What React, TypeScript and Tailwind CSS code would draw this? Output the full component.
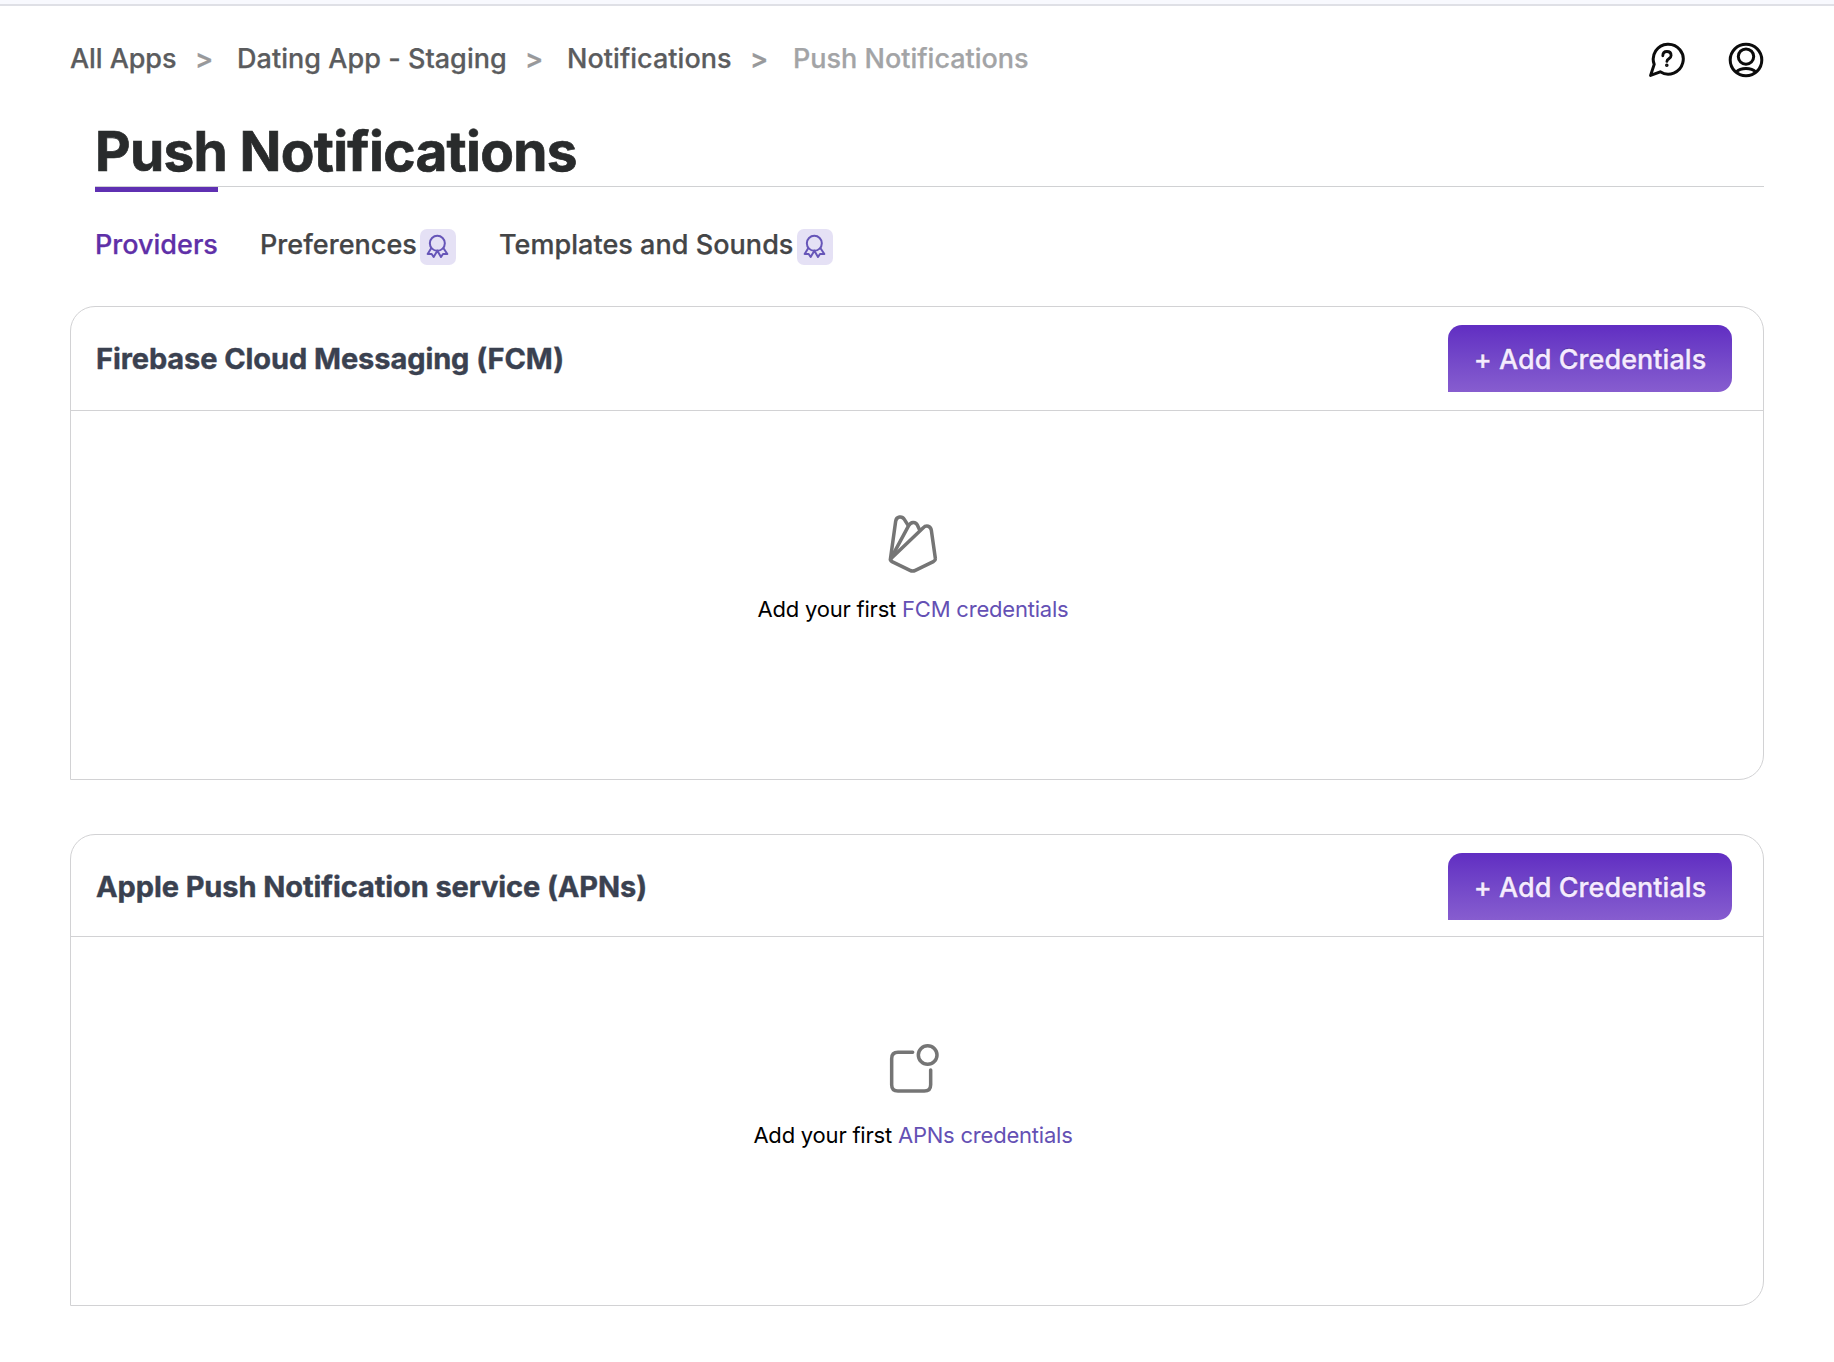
import type { ReactNode } from "react";

function AwardBadge() {
  return (
    <span className="ml-[5px] mt-[3px] flex h-9 w-9 shrink-0 items-center justify-center rounded-[7px] bg-[#e5e1f5]">
      <svg width="36" height="36" viewBox="0 0 108 108" fill="none" stroke="#6655b8" strokeWidth="6" strokeLinejoin="round">
        <circle cx="52" cy="43" r="22.5" />
        <path d="M34 57 L23 75 L35 75 L41 84 L52 65 L63 84 L69 75 L82 75 L70 57" />
      </svg>
    </span>
  );
}

function HelpIcon() {
  return (
    <svg width="38" height="38" viewBox="0 0 38 38" fill="none" stroke="#0c0c0c" strokeWidth="3" strokeLinecap="round" strokeLinejoin="round">
      <path d="M6.2 23.4 A15 15 0 1 1 12.2 30.8 L2.6 34.4 Z" />
      <path d="M14.8 14.8 C14.8 11.5 16.8 10.5 18.9 10.5 C21.5 10.5 23.1 12.2 23.1 14.4 C23.1 17.8 18.9 17.6 18.9 20.4" strokeWidth="2.8" />
      <circle cx="18.8" cy="24.2" r="0.8" strokeWidth="2" />
    </svg>
  );
}

function UserIcon() {
  return (
    <svg width="38" height="38" viewBox="0 0 38 38" fill="none" stroke="#0c0c0c" strokeWidth="3">
      <circle cx="19" cy="19" r="15.8" />
      <circle cx="19" cy="15.6" r="7.7" />
      <path d="M9 31.2 C14 26.2 24 26.2 29 31.2" />
    </svg>
  );
}

function FirebaseIcon() {
  return (
    <svg width="60" height="60" viewBox="430 38 180 180" fill="none" stroke="#757575" strokeWidth="10.5" strokeLinecap="round" strokeLinejoin="round">
      <path d="M452 178 L468 63 C470 48 487 46 494 57 L504 73" />
      <path d="M454 174 L507 76 C513 64 528 63 533 74 L540 89" />
      <path d="M455 174 L550 83 C560 73 573 77 575 90 L587 174 C588 180 585 182 581 184 L527 210 Q519 214 511 210 L457 184 Q450 180 455 174 Z" />
    </svg>
  );
}

function AppBadgeIcon() {
  return (
    <svg width="60" height="60" viewBox="430 59 180 180" fill="none" stroke="#757575" strokeWidth="10.5" strokeLinecap="round">
      <path d="M519 96 H475 Q456 96 456 115 V193 Q456 212 475 212 H554 Q573 212 573 193 V149" />
      <circle cx="564" cy="104" r="28" />
    </svg>
  );
}

function ProviderCard({
  title,
  cardClass,
  headerClass,
  bodyClass,
  icon,
  link,
}: {
  title: string;
  cardClass: string;
  headerClass: string;
  bodyClass: string;
  icon: ReactNode;
  link: string;
}) {
  return (
    <section className={"flex flex-col rounded-[25px] rounded-bl-none border border-[#d2d2d4] " + cardClass}>
      <header className={"flex shrink-0 items-start justify-between border-b border-[#d2d2d4] pl-[25px] pr-[31px] pt-[18px] " + headerClass}>
        <h2 className="flex h-[67px] items-center whitespace-nowrap text-[29px] font-bold tracking-[-0.09px] text-[#3a4150] [-webkit-text-stroke:0.4px_#3a4150]">{title}</h2>
        <button className="flex h-[67px] w-[284px] items-center justify-center whitespace-nowrap rounded-[14px] rounded-bl-none bg-linear-to-b from-[#612dc2] to-[#875dcf] pt-[3px] text-[27px] font-medium tracking-[0.04px] text-[#f5ebff] [-webkit-text-stroke:0.3px_#f5ebff] [text-shadow:0_-1px_1px_rgba(0,0,0,0.25)]">
          + Add Credentials
        </button>
      </header>
      <div className={"flex flex-col items-center pr-2 " + bodyClass}>
        {icon}
        <p className="whitespace-nowrap text-[22px] leading-[33px] tracking-[-0.21px] text-black">
          Add your first <a className="text-[#6450b4]">{link}</a>
        </p>
      </div>
    </section>
  );
}

export default function App() {
  return (
    <div className="h-[1362px] w-[1834px] overflow-hidden bg-white font-['Inter',sans-serif]">
      <div className="h-[6px] border-b-2 border-[#dfe0e6] bg-[#f8f9fe]" />
      <div className="flex h-[104px] items-start justify-between pl-[70px] pr-[69px]">
        <nav className="mt-[33px] flex h-10 items-center whitespace-nowrap text-[27px] font-medium text-[#5b5c5e] [-webkit-text-stroke:0.25px]">
          <span className="w-[125px] tracking-[-0.08px]">All Apps</span>
          <span className="w-[42px] font-semibold text-[#98999b]">&gt;</span>
          <span className="w-[288px] tracking-[0.04px]">Dating App - Staging</span>
          <span className="w-[42px] font-semibold text-[#98999b]">&gt;</span>
          <span className="w-[183px] tracking-[0.04px]">Notifications</span>
          <span className="w-[43px] font-semibold text-[#98999b]">&gt;</span>
          <span className="text-[#a3a4a6]">Push Notifications</span>
        </nav>
        <div className="mt-[35px] flex gap-[41px]">
          <HelpIcon />
          <UserIcon />
        </div>
      </div>
      <div className="ml-[95px] mr-[70px]">
        <h1 className="h-[77px] whitespace-nowrap border-b border-[#d0d1d3] text-[55px] font-bold leading-[82px] tracking-[-0.7px] text-[#292b2c] [-webkit-text-stroke:0.7px_#292b2c]">Push Notifications</h1>
        <div className="h-[5px] w-[123px] bg-[#5f30b2]" />
        <div className="mt-[34px] flex h-10 items-start whitespace-nowrap text-[27px] font-medium leading-[37px] text-[#444547] [-webkit-text-stroke:0.25px]">
          <div className="w-[165px] text-[#5f30a8]">Providers</div>
          <div className="flex w-[239px]">
            <span className="w-[155px] tracking-[0.04px]">Preferences</span>
            <AwardBadge />
          </div>
          <div className="flex">
            <span className="w-[293px] tracking-[0.04px]">Templates and Sounds</span>
            <AwardBadge />
          </div>
        </div>
      </div>
      <main className="mr-[70px] ml-[70px] mt-[40px] flex flex-col gap-[54px]">
        <ProviderCard
          title="Firebase Cloud Messaging (FCM)"
          cardClass="h-[474px]"
          headerClass="h-[104px]"
          bodyClass="pt-[102px] gap-5"
          icon={<FirebaseIcon />}
          link="FCM credentials"
        />
        <ProviderCard
          title="Apple Push Notification service (APNs)"
          cardClass="h-[472px]"
          headerClass="h-[102px]"
          bodyClass="pt-[103px] gap-[19px]"
          icon={<AppBadgeIcon />}
          link="APNs credentials"
        />
      </main>
    </div>
  );
}
